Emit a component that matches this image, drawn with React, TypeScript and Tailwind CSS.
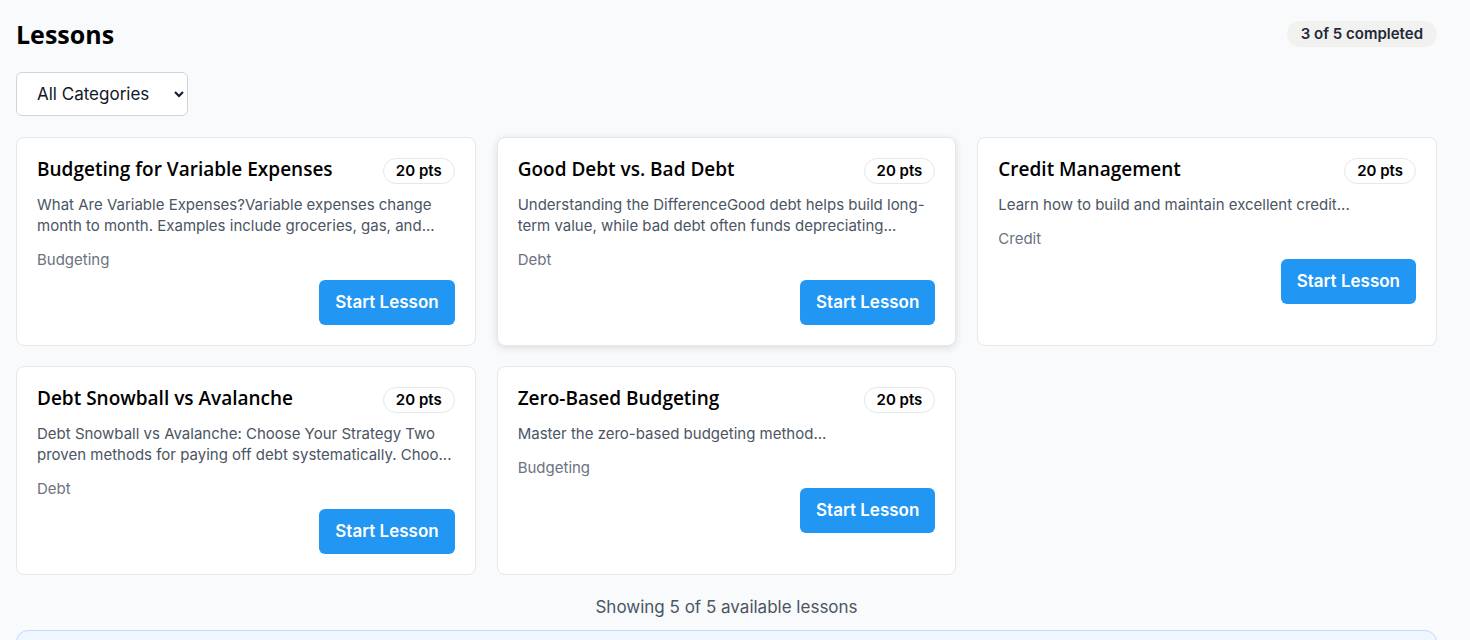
const lessons = [
  {
    title: "Budgeting for Variable Expenses",
    desc: "What Are Variable Expenses?Variable expenses change month to month. Examples include groceries, gas, and...",
    cat: "Budgeting",
  },
  {
    title: "Good Debt vs. Bad Debt",
    desc: "Understanding the DifferenceGood debt helps build long-term value, while bad debt often funds depreciating...",
    cat: "Debt",
    hover: true,
  },
  {
    title: "Credit Management",
    desc: "Learn how to build and maintain excellent credit...",
    cat: "Credit",
  },
  {
    title: "Debt Snowball vs Avalanche",
    desc: "Debt Snowball vs Avalanche: Choose Your Strategy Two proven methods for paying off debt systematically. Choo...",
    cat: "Debt",
  },
  {
    title: "Zero-Based Budgeting",
    desc: "Master the zero-based budgeting method...",
    cat: "Budgeting",
  },
];

function LessonCard({ lesson }: { lesson: (typeof lessons)[number] }) {
  return (
    <div
      className={
        "bg-white border border-[#e5e7eb] rounded-lg p-5 flex flex-col " +
        (lesson.hover ? "shadow-[0_2px_8px_rgba(0,0,0,0.12)]" : "")
      }
    >
      <div className="flex items-start justify-between gap-3 h-[28px]">
        <h3 className="font-['Open_Sans',sans-serif] font-semibold text-[19px] leading-[22px] text-black">
          {lesson.title}
        </h3>
        <span className="shrink-0 h-[26px] px-3 rounded-full border border-[#e5e7eb] text-[15px] font-semibold text-black leading-[24px]">
          20 pts
        </span>
      </div>
      <p className="mt-2 text-[15px] leading-[21px] text-[#4b5563] line-clamp-2">{lesson.desc}</p>
      <div className="mt-[13px] text-[15px] leading-[21px] text-[#6b7280]">{lesson.cat}</div>
      <div className="mt-[10px] flex justify-end">
        <button className="h-[45px] px-4 rounded-md bg-[#2196f3] text-white text-[17px] font-semibold">
          Start Lesson
        </button>
      </div>
    </div>
  );
}

export default function App() {
  return (
    <main className="bg-[#f8fafc] pl-4 pr-[33px] font-['Inter',sans-serif] overflow-hidden h-[640px]">
      <div className="flex items-center justify-between pt-[21px]">
        <h1 className="font-['Open_Sans',sans-serif] font-bold text-[25px] leading-[26px] text-black">Lessons</h1>
        <span className="h-[26px] px-[14px] rounded-full bg-[#f1f1ef] text-[15px] font-semibold text-[#1f2937] leading-[26px]">
          3 of 5 completed
        </span>
      </div>
      <div className="mt-[25px]">
        <select className="h-[44px] w-[172px] pl-4 pr-2 rounded-md border border-[#d1d5db] bg-white text-[17px] text-[#111827]">
          <option>All Categories</option>
          <option>Budgeting</option>
          <option>Debt</option>
          <option>Credit</option>
        </select>
      </div>
      <div className="mt-[21px] grid grid-cols-3 gap-x-[21px] gap-y-5">
        {lessons.map((l) => (
          <LessonCard key={l.title} lesson={l} />
        ))}
      </div>
      <p className="mt-5 text-center text-[17px] leading-6 text-[#4b5563]">Showing 5 of 5 available lessons</p>
      <div className="mt-[11px] h-[60px] rounded-xl border border-[#bfdbfe] bg-[#eff6ff]" />
    </main>
  );
}
